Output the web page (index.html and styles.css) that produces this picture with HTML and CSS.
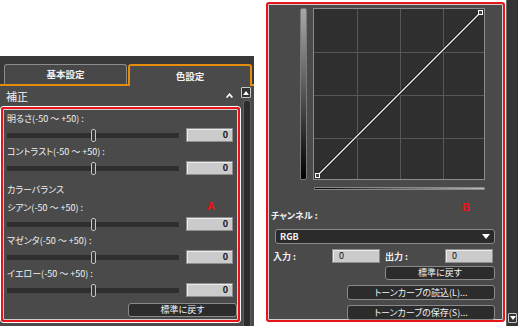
FILE: index.html
```html
<!DOCTYPE html>
<html lang="ja">
<head>
<meta charset="utf-8">
<link rel="stylesheet" href="styles.css">
</head>
<body>
<div class="app">
  <section class="left">
    <div class="tabs">
      <div class="tab">基本設定</div>
      <div class="tab active">色設定</div>
    </div>
    <div class="left-body">
      <div class="main">
        <div class="section-head">
          <span>補正</span>
          <svg class="caret" width="7" height="5" viewBox="0 0 7 5"><polyline points="0.6,4.6 3.5,1.2 6.4,4.6" fill="none" stroke="#fff" stroke-width="1.6"/></svg>
        </div>
        <div class="redbox rb-left">
          <div class="group">
            <div class="label">明るさ(-50 〜 +50) :</div>
            <div class="row"><div class="track"><div class="thumb"></div></div><div class="num">0</div></div>
          </div>
          <div class="group">
            <div class="label">コントラスト(-50 〜 +50) :</div>
            <div class="row"><div class="track"><div class="thumb"></div></div><div class="num">0</div></div>
          </div>
          <div class="heading">カラーバランス</div>
          <div class="group">
            <div class="label">シアン(-50 〜 +50) :</div>
            <div class="row"><div class="track"><div class="thumb"></div></div><div class="num">0</div></div>
          </div>
          <div class="group">
            <div class="label">マゼンタ(-50 〜 +50) :</div>
            <div class="row"><div class="track"><div class="thumb"></div></div><div class="num">0</div></div>
          </div>
          <div class="group">
            <div class="label">イエロー(-50 〜 +50) :</div>
            <div class="row"><div class="track"><div class="thumb"></div></div><div class="num">0</div></div>
          </div>
          <div class="btn-row"><div class="btn btn-reset">標準に戻す</div></div>
          <span class="mark mark-a">A</span>
        </div>
      </div>
      <div class="vscroll">
        <div class="sb-btn"><svg width="6" height="4" viewBox="0 0 6 4"><polygon points="0,4 3,0 6,4" fill="#fff"/></svg></div>
        <div class="sb-track"></div>
      </div>
    </div>
  </section>

  <section class="right">
    <div class="rmain">
      <div class="redbox rb-right">
        <div class="curve-row">
          <div class="vgrad"></div>
          <svg class="graph" width="172" height="172" viewBox="0 0 172 172">
            <rect x="0.5" y="0.5" width="171" height="171" fill="#2f2f2f" stroke="#8c8c8c"/>
            <g stroke="#575757" stroke-width="1">
              <line x1="44.5" y1="1" x2="44.5" y2="171"/>
              <line x1="87.5" y1="1" x2="87.5" y2="171"/>
              <line x1="130.5" y1="1" x2="130.5" y2="171"/>
              <line x1="1" y1="44.5" x2="171" y2="44.5"/>
              <line x1="1" y1="87.5" x2="171" y2="87.5"/>
              <line x1="1" y1="130.5" x2="171" y2="130.5"/>
            </g>
            <line x1="4" y1="168" x2="168" y2="4" stroke="#151515" stroke-width="3"/>
            <line x1="4" y1="168" x2="168" y2="4" stroke="#f4f4f4" stroke-width="1.3"/>
            <rect x="2.5" y="165.5" width="4" height="4" fill="#444" stroke="#fff"/>
            <rect x="165.5" y="2.5" width="4" height="4" fill="#444" stroke="#fff"/>
          </svg>
        </div>
        <div class="hgrad"></div>
        <div class="rlabel">チャンネル :</div>
        <div class="select"><span>RGB</span><svg width="8" height="5" viewBox="0 0 8 5"><polygon points="0,0 8,0 4,5" fill="#fff"/></svg></div>
        <div class="io-row">
          <span class="io-label">入力 :</span>
          <div class="num num-l">0</div>
          <span class="io-label io-out">出力 :</span>
          <div class="num num-l">0</div>
        </div>
        <div class="btn btn-r1">標準に戻す</div>
        <div class="btn btn-r2">トーンカーブの読込(L)...</div>
        <div class="btn btn-r2">トーンカーブの保存(S)...</div>
        <span class="mark mark-b">B</span>
      </div>
    </div>
    <div class="vscroll-r">
      <div class="sb-btn sb-down"><svg width="6" height="4" viewBox="0 0 6 4"><polygon points="0,0 6,0 3,4" fill="#fff"/></svg></div>
    </div>
  </section>
</div>
</body>
</html>
```

FILE: styles.css
```css
* { box-sizing: border-box; margin: 0; padding: 0; }
html, body { background: #fff; }
body {
  font-family: "Noto Sans CJK JP", "Noto Sans", sans-serif;
  font-feature-settings: "palt";
  font-size: 9px;
  color: #f2f2f2;
}
.app { display: flex; gap: 10px; width: 518px; height: 326px; overflow: hidden; }

/* left panel */
.left {
  width: 254px; height: 270px; margin-top: 56px;
  background: #4a4a4a;
  display: flex; flex-direction: column;
}
.tabs {
  height: 30px; flex: 0 0 30px;
  background: #393939;
  border-bottom: 2px solid #e58c0c;
  display: flex; align-items: flex-end; gap: 1px;
  padding-left: 4px;
}
.tab {
  width: 123px; height: 20px;
  border: 1px solid #8c8c8c; border-bottom: none;
  border-radius: 3px 3px 0 0;
  background: #474747;
  text-align: center; line-height: 19px;
  font-weight: bold; font-size: 9.5px;
}
.tab.active {
  width: 124px; height: 22px; margin-bottom: -2px;
  border: 2px solid #e58c0c; border-bottom: none;
  background: #4a4a4a;
  line-height: 20px;
}
.left-body { flex: 1; display: flex; }
.main { width: 241px; display: flex; flex-direction: column; }
.section-head {
  height: 19px; display: flex; align-items: center; justify-content: space-between;
  padding: 0 8px 0 6px; font-size: 11px;
}
.caret { display: block; }

.redbox {
  position: relative;
  border: 2px solid #e8141b;
  border-radius: 3px;
  box-shadow: 0 0 0 1px #fff, inset 0 0 0 1px #cfcfcf;
}
.rb-left {
  margin: 2px 0 0 1px; width: 239px; height: 215px;
  padding: 2px 5px 0 4px;
}
.label { height: 15px; line-height: 15px; white-space: nowrap; }
.row { height: 18px; display: flex; align-items: center; gap: 7px; }
.track { flex: 1; height: 5px; background: #2f2f2f; position: relative; }
.thumb {
  position: absolute; left: 84px; top: -4px;
  width: 5px; height: 13px;
  border: 1px solid #c4c4c4; border-radius: 2px; background: #3a3a3a;
}
.num {
  width: 47px; height: 14px;
  background: #cbcbcb;
  border: 1px solid #8e8e8e;
  box-shadow: inset 1px 1px 0 #ececec;
  color: #111; font-weight: bold; font-size: 9px;
  text-align: right; padding-right: 4px; line-height: 12px;
}
.heading { height: 23px; padding-top: 2px; line-height: 21px; }
.btn-row { display: flex; justify-content: flex-end; margin-top: 4px; margin-right: -4px; }
.btn {
  height: 14px; background: #2c2c2c;
  border: 1px solid #8a8a8a; border-radius: 3px;
  text-align: center; line-height: 12px; white-space: nowrap;
}
.btn-reset { width: 109px; }

.mark {
  position: absolute; color: #f01010;
  font-family: "Liberation Sans", sans-serif; font-weight: bold;
  font-size: 11px; line-height: 9px;
}
.mark-a { left: 204px; top: 93px; }
.mark-b { left: 194px; top: 199px; }

.vscroll { width: 13px; display: flex; flex-direction: column; padding-top: 1px; }
.sb-btn {
  width: 10px; height: 11px;
  border: 1px solid #c8c8c8; border-radius: 1px; background: #333;
  display: flex; align-items: center; justify-content: center;
}
.sb-track {
  margin: 2px 0 0 2px; width: 8px; flex: 1;
  background: #2c2c2c; border: 1px solid #5e5e5e; border-bottom: none;
  border-radius: 3px 3px 0 0;
}

/* right panel */
.right { width: 254px; height: 326px; display: flex; }
.rmain { width: 242px; padding: 2px 1px 0 2px; }
.rb-right {
  width: 239px; height: 320px;
  padding: 4px 8px 0 0;
  background: #4a4a4a;
  display: flex; flex-direction: column;
  overflow: hidden;
}
.curve-row { display: flex; gap: 6px; margin-left: 32px; }
.vgrad {
  width: 7px; height: 172px;
  border: 1px solid #7a7a7a; border-radius: 2px;
  background: linear-gradient(to bottom, #a8a8a8, #000);
}
.graph { display: block; }
.hgrad {
  margin: 7px 0 0 46px; width: 171px; height: 6px;
  border: 1px solid #8a8a8a; border-radius: 1px;
  background: linear-gradient(to right, #000, #bdbdbd);
}
.rlabel { margin: 19px 0 0 3px; height: 14px; line-height: 14px; font-weight: bold; }
.select {
  margin: 6px 0 0 7px; height: 15px;
  background: #2a2a2a; border: 1px solid #8a8a8a; border-radius: 3px;
  display: flex; align-items: center; justify-content: space-between;
  padding: 0 4px 0 4px; font-weight: bold;
}
.select svg { display: block; }
.io-row { margin-top: 5px; height: 14px; display: flex; align-items: center; }
.io-label { width: 59px; margin-left: 5px; font-weight: bold; }
.io-out { margin-left: 5px; width: 60px; }
.num-l { width: 48px; text-align: left; padding-left: 6px; font-weight: normal; }
.btn-r1 { margin: 3px 0 0 auto; width: 110px; }
.btn-r2 { margin: 5px 0 0 auto; width: 148px; height: 15px; line-height: 13px; }

.vscroll-r {
  width: 12px; height: 326px;
  background: #343434; border-left: 1px solid #6a6a6a;
  display: flex; flex-direction: column; justify-content: flex-end;
  padding: 0 0 3px 1px;
}
.sb-down { width: 9px; height: 10px; }
```
